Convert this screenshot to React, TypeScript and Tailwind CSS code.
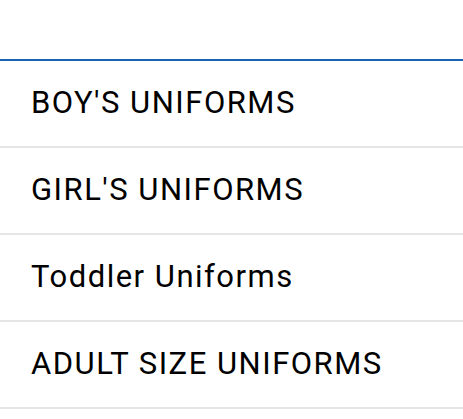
const items = ["BOY'S UNIFORMS", "GIRL'S UNIFORMS", 'Toddler Uniforms', 'ADULT SIZE UNIFORMS'];

export default function App() {
  return (
    <div className="w-[463px] h-[419px] bg-white" style={{ fontFamily: 'Roboto, "Liberation Sans", sans-serif' }}>
      <div className="h-[59px]" />
      <ul className="border-t-2 border-[#1a64b4]">
        {items.map((label) => (
          <li key={label} className="h-[87px] border-b-2 border-[#e5e5e5] flex items-center pl-[31px]">
            <span className="text-[31px] text-black tracking-[1.5px]">{label}</span>
          </li>
        ))}
      </ul>
    </div>
  );
}
